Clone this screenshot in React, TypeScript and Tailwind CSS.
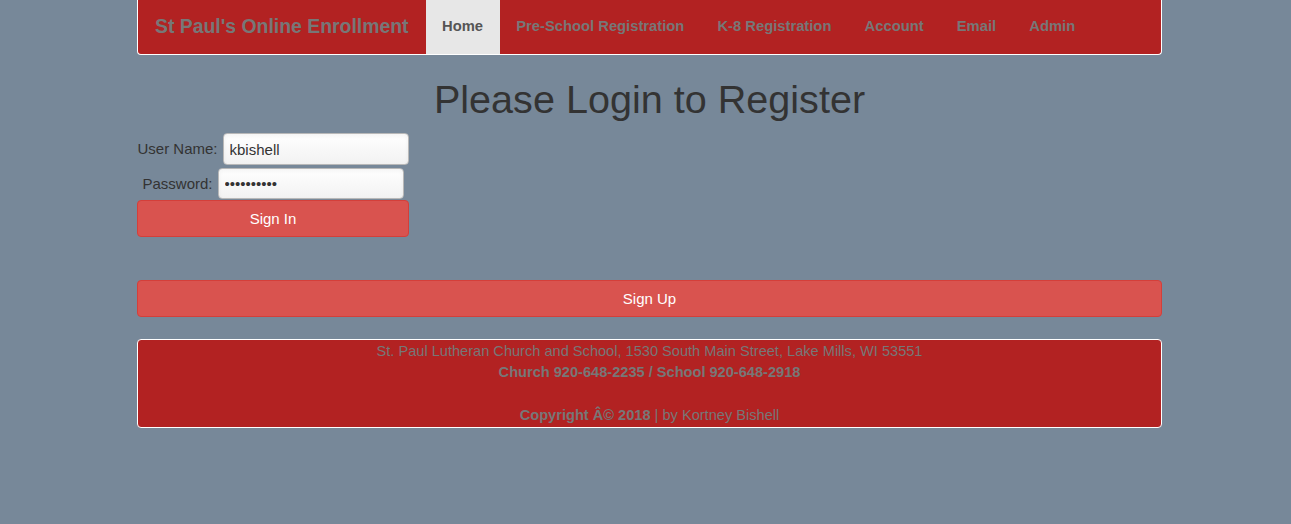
import React from "react";

const links = ["Pre-School Registration", "K-8 Registration", "Account", "Email", "Admin"];

const Navbar = () => (
  <nav className="flex h-[55px] items-stretch rounded-b border-x border-b border-white bg-[#b22222]">
    <a className="flex items-center pb-[1px] pl-[17px] pr-[17px] text-[19.4px] font-bold text-[#777]">
      St Paul's Online Enrollment
    </a>
    <ul className="flex text-[14.75px]">
      <li className="flex items-center bg-[#e7e7e7] px-[16.6px] pb-[1px] font-bold text-[#555]">Home</li>
      {links.map((l) => (
        <li key={l} className="flex items-center px-[16.6px] pb-[1px] font-bold text-[#777]">
          {l}
        </li>
      ))}
    </ul>
  </nav>
);

const inputCls =
  "w-[186px] rounded-[4px] border border-[#b8b8b8] bg-gradient-to-b from-white to-[#f2f2f2] px-[6px] text-[15px] text-[#333] shadow-inner outline-none";

const LoginForm = () => (
  <div className="w-[272px] text-center">
    <div className="flex items-center justify-center gap-[5px]">
      <label className="text-[#333]">User Name:</label>
      <input className={`h-[32px] ${inputCls}`} defaultValue="kbishell" />
    </div>
    <div className="mt-[3px] flex items-center justify-center gap-[5px]">
      <label className="text-[#333]">Password:</label>
      <input className={`h-[31px] ${inputCls}`} type="password" defaultValue="kbishell12" />
    </div>
    <button className="mt-[1px] h-[37px] w-full rounded-[4px] border border-[#d43f3a] bg-[#d9534f] text-white">
      Sign In
    </button>
  </div>
);

export default function App() {
  return (
    <div className="min-h-[524px] bg-[#778899] font-['Liberation_Sans',Arial,sans-serif] text-[15px] leading-[1.42857]">
      <div className="ml-[137px] w-[1025px]">
        <Navbar />
        <h1 className="mt-[22px] text-center text-[39.6px] leading-[44px] text-[#333]">Please Login to Register</h1>
        <div className="mt-[12px]">
          <LoginForm />
        </div>
        <button className="mt-[43px] h-[37px] w-full rounded-[4px] border border-[#d43f3a] bg-[#d9534f] text-white">
          Sign Up
        </button>
        <footer className="mt-[22px] rounded-[4px] border border-white bg-[#b22222] pt-[1px] text-center text-[14.6px] leading-[21.4px] text-[#777]">
          <p>St. Paul Lutheran Church and School, 1530 South Main Street, Lake Mills, WI 53551</p>
          <p className="font-bold">Church 920-648-2235 / School 920-648-2918</p>
          <br />
          <p>
            <b>Copyright Â© 2018</b> | by Kortney Bishell
          </p>
        </footer>
      </div>
    </div>
  );
}
